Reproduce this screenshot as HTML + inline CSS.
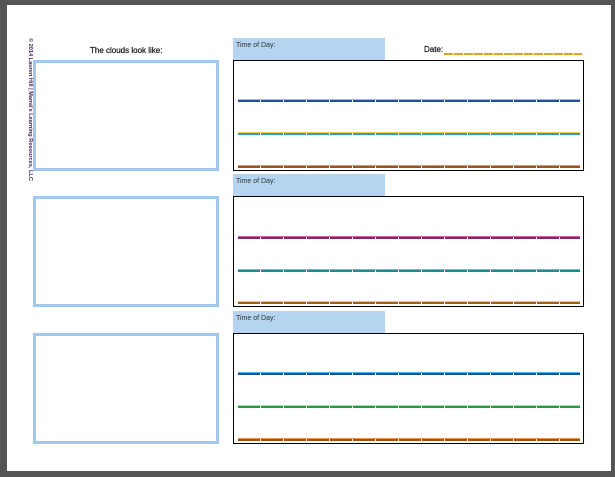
<!DOCTYPE html><html><head><style>
body{margin:0;width:615px;height:477px;background:#555;position:relative;overflow:hidden;font-family:"Liberation Sans",sans-serif}
.pg{position:absolute;left:7px;top:5px;width:604px;height:466px;background:#fff}
.lb{position:absolute;left:33px;width:180px;height:105px;border:3px solid #9fc8ec}
.hd{position:absolute;left:233px;width:152px;height:22px;background:#b4d4f0;font-size:7px;color:#333}
.hd span{position:absolute;left:3px;top:4px}
.rb{position:absolute;left:233px;width:349px;height:109px;border:1px solid #000}
.ln{position:absolute;left:4px;width:342px;height:2px;background:repeating-linear-gradient(90deg,var(--c) 0 22px,#fff 22px 23px)}
.ln::before{content:"";position:absolute;left:0;right:0;top:-1px;height:1px;background:var(--t);opacity:.8}
</style></head><body>
<div class="pg"></div>
<div style="position:absolute;left:21px;top:38px;width:150px;font-size:5.6px;font-weight:bold;color:#402060;transform-origin:0 0;transform:translate(12px,0) rotate(90deg);white-space:nowrap">© 2014 Lauren Hill | Mamá's Learning Resources, LLC</div>
<div style="position:absolute;left:90px;top:46px;font-size:8px;color:#111;font-weight:500;-webkit-text-stroke:0.2px #111">The clouds look like:</div>
<div style="position:absolute;left:424px;top:45px;font-size:8px;color:#111;-webkit-text-stroke:0.2px #111">Date:</div>
<div style="position:absolute;left:444px;top:53px;width:138px;height:2px;background:repeating-linear-gradient(90deg,#e8a020 0 9px,#fff 9px 10px)"></div>
<div class="lb" style="top:60px"></div><div class="lb" style="top:196px"></div><div class="lb" style="top:333px"></div>
<div class="hd" style="top:38px"><span>Time of Day:</span></div>
<div class="hd" style="top:174px"><span>Time of Day:</span></div>
<div class="hd" style="top:311px"><span>Time of Day:</span></div>
<div class="rb" style="top:60px">
<div class="ln" style="top:39px;--c:#1e4fa0;--t:#e8a020"></div>
<div class="ln" style="top:72px;--c:#2aa0c8;--t:#f0c020"></div>
<div class="ln" style="top:105px;--c:#a0501a;--t:#e08020"></div></div>
<div class="rb" style="top:196px">
<div class="ln" style="top:40px;--c:#7a2a7a;--t:#c04080"></div>
<div class="ln" style="top:73px;--c:#1a8a9a;--t:#40b0a0"></div>
<div class="ln" style="top:105px;--c:#a06010;--t:#f0c020"></div></div>
<div class="rb" style="top:333px">
<div class="ln" style="top:39px;--c:#1e4fa0;--t:#30a0e0"></div>
<div class="ln" style="top:72px;--c:#2a9a40;--t:#f0c020"></div>
<div class="ln" style="top:105px;--c:#a0501a;--t:#e08020"></div></div>
</body></html>
